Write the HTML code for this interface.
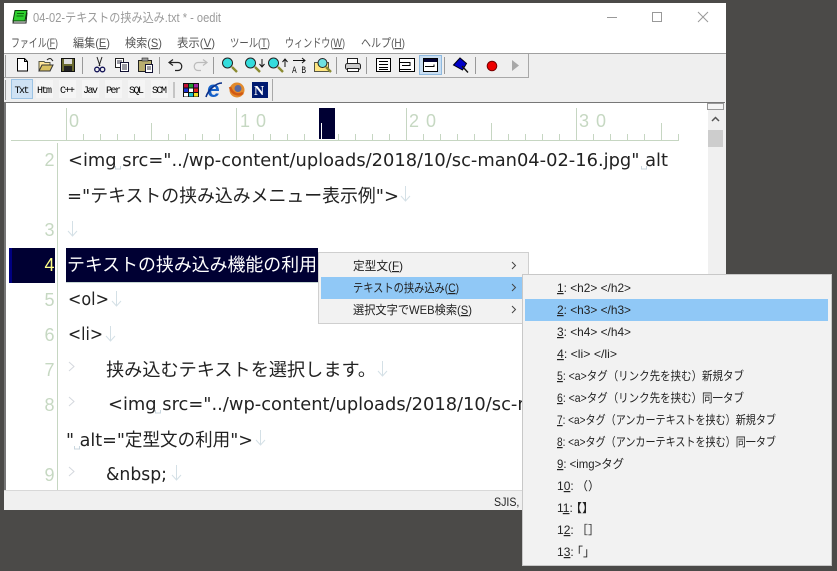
<!DOCTYPE html>
<html><head><meta charset="utf-8"><title>oedit</title>
<style>
html,body{margin:0;padding:0;background:#4b4a48;width:837px;height:571px;overflow:hidden}
svg{display:block}
.t{font-family:"DejaVu Sans","Noto Sans CJK JP",sans-serif;font-size:18px;fill:#222}
.j{font-family:"Liberation Sans","Noto Sans CJK JP",sans-serif;font-size:18px;fill:#222}
.n{font-family:"Liberation Sans",sans-serif;font-size:18px;fill:#c6d8c2}
.m{font-family:"Liberation Sans","Noto Sans CJK JP",sans-serif;font-size:12px;fill:#555}
.p{font-family:"Liberation Sans","Noto Sans CJK JP",sans-serif;font-size:12px;fill:#222}
.u{text-decoration:underline}
.b{font-family:"Liberation Mono",monospace;font-size:10px;fill:#000}
.ar{fill:none;stroke:#d4e0e6;stroke-width:1}
.tb{fill:none;stroke:#d4d8de;stroke-width:1}
.sp{fill:none;stroke:#c8d6de;stroke-width:1}
</style></head><body>
<svg width="837" height="571" viewBox="0 0 837 571" xmlns="http://www.w3.org/2000/svg">
<rect width="837" height="571" fill="#4b4a48"/>
<!-- window -->
<rect x="4" y="3" width="722" height="507" fill="#fff"/>
<!-- title -->
<g transform="translate(12,10)">
<path d="M3 3h12l-1 10H1z" fill="#fff" stroke="#222"/>
<path d="M3 0.500h12l-2 10.500H1z" fill="#2ecf2e" stroke="#0a3a0a"/>
<path d="M5 3.500h7M4.500 6h7" stroke="#0c6a0c"/>
</g>
<text class="m" x="33" y="22" style="font-size:12.500px;fill:#9a9a9a" textLength="188" lengthAdjust="spacingAndGlyphs">04-02-テキストの挟み込み.txt * - oedit</text>
<path d="M607 17.500h10" stroke="#999"/>
<rect x="652.500" y="12.500" width="9" height="9" fill="none" stroke="#999"/>
<path d="M698 12l10 10M708 12l-10 10" stroke="#999"/>
<!-- menu -->
<text class="m" x="11" y="47" textLength="47" lengthAdjust="spacingAndGlyphs"><tspan>ファイル(</tspan><tspan class="u">F</tspan><tspan>)</tspan></text>
<text class="m" x="73" y="47" textLength="37" lengthAdjust="spacingAndGlyphs"><tspan>編集(</tspan><tspan class="u">E</tspan><tspan>)</tspan></text>
<text class="m" x="125" y="47" textLength="37" lengthAdjust="spacingAndGlyphs"><tspan>検索(</tspan><tspan class="u">S</tspan><tspan>)</tspan></text>
<text class="m" x="177" y="47" textLength="38" lengthAdjust="spacingAndGlyphs"><tspan>表示(</tspan><tspan class="u">V</tspan><tspan>)</tspan></text>
<text class="m" x="230" y="47" textLength="40" lengthAdjust="spacingAndGlyphs"><tspan>ツール(</tspan><tspan class="u">T</tspan><tspan>)</tspan></text>
<text class="m" x="285" y="47" textLength="60" lengthAdjust="spacingAndGlyphs"><tspan>ウィンドウ(</tspan><tspan class="u">W</tspan><tspan>)</tspan></text>
<text class="m" x="361" y="47" textLength="44" lengthAdjust="spacingAndGlyphs"><tspan>ヘルプ(</tspan><tspan class="u">H</tspan><tspan>)</tspan></text>
<!-- toolbars -->
<rect x="4" y="53" width="722" height="49" fill="#efefef"/>
<rect x="4" y="53" width="722" height="1" fill="#a0a0a0"/>
<rect x="4" y="77" width="524" height="1" fill="#a8a8a8"/>
<rect x="528" y="54" width="1" height="24" fill="#a8a8a8"/>
<rect x="272" y="79" width="1" height="22" fill="#a8a8a8"/>
<rect x="5" y="55" width="1" height="22" fill="#999"/>
<rect x="5" y="80" width="1" height="20" fill="#999"/>
<!-- tb1 seps -->
<path d="M83 57v17M160 57v17M214 57v17M337 57v17M367 57v17M445 57v17M476 57v17M174.500 82v16" stroke="#999" fill="none" transform="translate(-.5,0)"/>
<!-- new -->
<path d="M17.500 58.500h7l3 3v9.500h-10z M24.500 58.500v3h3" fill="#fff" stroke="#000"/>
<!-- open -->
<path d="M39 61.500h5l1 1h5v8.500h-11z" fill="#ffe79a" stroke="#554"/>
<path d="M39 71l3-6h11l-3 6z" fill="#d8c060" stroke="#333"/>
<path d="M47 60c2-2 4-2 5 0l1 1" fill="none" stroke="#222"/>
<!-- save -->
<rect x="61.500" y="58.500" width="13" height="13" fill="#6b6b30" stroke="#111"/>
<rect x="64" y="59" width="8" height="5" fill="#ddd"/>
<rect x="64" y="66" width="8" height="5" fill="#222"/>
<!-- cut -->
<path d="M97 57l3 9M102 57l-3 9" stroke="#222" fill="none"/>
<circle cx="97" cy="69.500" r="2.300" fill="none" stroke="#115" stroke-width="1.300"/>
<circle cx="102.500" cy="69.500" r="2.300" fill="none" stroke="#115" stroke-width="1.300"/>
<!-- copy -->
<rect x="115.500" y="58.500" width="8" height="9" fill="#fff" stroke="#222"/>
<rect x="120.500" y="62.500" width="8" height="9" fill="#fff" stroke="#113"/>
<path d="M117 61h5M117 63h3M122 65h5M122 67h5M122 69h5" stroke="#334"/>
<!-- paste -->
<rect x="138.500" y="60.500" width="13" height="11" fill="#b8ad70" stroke="#222"/>
<rect x="142" y="58" width="6" height="3" fill="#999" stroke="#222" stroke-width=".6"/>
<rect x="145.500" y="64.500" width="7" height="8" fill="#fff" stroke="#113"/>
<path d="M147 67h4M147 69h4" stroke="#334"/>
<!-- undo / redo -->
<path d="M170 62.500h8c5 0 5 8 0 8h-3" fill="none" stroke="#222" stroke-width="1.200"/>
<path d="M173 59.500l-4 3 4 3" fill="none" stroke="#222" stroke-width="1.200"/>
<path d="M206 62.500h-8c-5 0-5 8 0 8h3" fill="none" stroke="#bbb" stroke-width="1.200"/>
<path d="M203 59.500l4 3-4 3" fill="none" stroke="#bbb" stroke-width="1.200"/>
<!-- find -->
<path d="M232 67l5 5" stroke="#8a8a30" stroke-width="2.400"/><circle cx="227.500" cy="63" r="5" fill="#34dcdc" stroke="#222"/>
<path d="M255 67l5 5" stroke="#8a8a30" stroke-width="2.400"/><circle cx="250.500" cy="63" r="5" fill="#34dcdc" stroke="#222"/>
<path d="M262 59v7M259.500 64l2.500 3 2.500-3" fill="none" stroke="#111"/>
<path d="M278 67l5 5" stroke="#8a8a30" stroke-width="2.400"/><circle cx="273.500" cy="63" r="5" fill="#34dcdc" stroke="#222"/>
<path d="M285 67v-7M282.500 62l2.500-3 2.500 3" fill="none" stroke="#111"/>
<!-- replace -->
<path d="M293 60.500h12M302 58l3 2.500-3 2.500" fill="none" stroke="#111"/>
<text x="292" y="73" style="font:10.500px 'Liberation Mono',monospace;fill:#111" textLength="14" lengthAdjust="spacingAndGlyphs">A B</text>
<!-- find file -->
<path d="M314.500 62.500h14v9h-14z" fill="#ffe680" stroke="#554"/>
<path d="M326 67l5 5" stroke="#8a8a30" stroke-width="2.400"/><circle cx="322.500" cy="63" r="4.500" fill="#6ee0e0" stroke="#222"/>
<!-- print -->
<rect x="347.500" y="58.500" width="10" height="5" fill="#fff" stroke="#222"/>
<rect x="345.500" y="63.500" width="15" height="6" rx="2" fill="#ccc" stroke="#222"/>
<rect x="347.500" y="68.500" width="11" height="3" fill="#fff" stroke="#222"/>
<!-- text format -->
<rect x="376.500" y="58.500" width="14" height="13" fill="#fff" stroke="#000"/>
<path d="M379 61.500h9M379 64.500h9M379 67.500h9M379 69.500h9" stroke="#000"/>
<rect x="399.500" y="58.500" width="15" height="13" fill="#fff" stroke="#000"/>
<path d="M400 62.500h10v3h-8M400 69.500h11" fill="none" stroke="#000"/>
<rect x="419.500" y="55.500" width="22" height="19" fill="#c9def2" stroke="#8fb9de"/>
<rect x="423.500" y="58.500" width="14" height="13" fill="#fff" stroke="#000"/>
<rect x="424" y="59" width="13" height="3" fill="#000033"/>
<path d="M425 66.500h9v-2" fill="none" stroke="#000"/>
<!-- pin -->
<path d="M453.500 65L460 58l6.500 5.500-4 6.500z" fill="#0000c8" stroke="#001"/>
<path d="M462 66l6 6.500" stroke="#111" stroke-width="1.400"/>
<!-- rec / play -->
<circle cx="492" cy="66" r="4.800" fill="#ee0000" stroke="#700"/>
<path d="M512 60l7 5.500-7 5.500z" fill="#a8a8a8"/>
<!-- tb2 -->
<rect x="11.500" y="79.500" width="21" height="19" fill="#cfe2f4" stroke="#9cc3e4"/>
<rect x="36" y="80" width="17" height="18" fill="#f5f5f5"/><rect x="59" y="80" width="17" height="18" fill="#f5f5f5"/><rect x="82" y="80" width="17" height="18" fill="#f5f5f5"/><rect x="105" y="80" width="17" height="18" fill="#f5f5f5"/><rect x="128" y="80" width="17" height="18" fill="#f5f5f5"/><rect x="151" y="80" width="17" height="18" fill="#f5f5f5"/>
<text class="b" x="14.500" y="93" textLength="15">Txt</text>
<text class="b" x="37" y="93" textLength="15">Htm</text>
<text class="b" x="60" y="93" textLength="15">C++</text>
<text class="b" x="83" y="93" textLength="15">Jav</text>
<text class="b" x="106" y="93" textLength="15">Per</text>
<text class="b" x="129" y="93" textLength="15">SQL</text>
<text class="b" x="152" y="93" textLength="15">SCM</text>
<!-- palette -->
<rect x="183" y="83" width="16" height="14" fill="#111"/>
<rect x="184" y="84" width="4" height="3.500" fill="#c01030"/><rect x="189" y="84" width="4" height="3.500" fill="#20a030"/><rect x="194" y="84" width="4" height="3.500" fill="#a020a0"/>
<rect x="184" y="88.500" width="4" height="3.500" fill="#2030d0"/><rect x="189" y="88.500" width="4" height="3.500" fill="#fff"/><rect x="194" y="88.500" width="4" height="3.500" fill="#e02020"/>
<rect x="184" y="93" width="4" height="3.500" fill="#fff"/><rect x="189" y="93" width="4" height="3.500" fill="#20c0d0"/><rect x="194" y="93" width="4" height="3.500" fill="#f0e020"/>
<!-- IE -->
<text x="207" y="97" style="font:bold 23px 'Liberation Sans',sans-serif;fill:#1560c8">e</text>
<path d="M206 97c2-7 10-14 16-14" fill="none" stroke="#0b2f88" stroke-width="1.600"/>
<!-- firefox -->
<circle cx="237" cy="90" r="7.500" fill="#e28a2c"/>
<circle cx="238" cy="88.500" r="3.500" fill="#5a6aa0"/>
<path d="M230 87c2 7 8 9 13 6" fill="none" stroke="#d25a14" stroke-width="2.500"/>
<!-- N -->
<rect x="252" y="82" width="16" height="16" fill="#001a70"/>
<text x="254" y="95" style="font:bold 14px 'Liberation Serif',serif;fill:#fff">N</text>
<!-- editor -->
<rect x="4" y="102" width="2" height="389" fill="#777"/>
<rect x="4" y="102" width="721" height="1" fill="#777"/>
<rect x="6" y="103" width="702" height="388" fill="#fff"/>
<!-- ruler -->
<path d="M11 140.500h668" stroke="#c6d6c2" fill="none"/>
<path stroke="#c6d6c2" fill="none" d="M66.500 108v32M236.500 108v32M406.500 108v32M576.500 108v32
M151.500 123v17M491.500 123v17M661.500 123v17
M83.500 134v6M100.500 134v6M117.500 134v6M134.500 134v6M168.500 134v6M185.500 134v6M202.500 134v6M219.500 134v6
M253.500 134v6M270.500 134v6M287.500 134v6M304.500 134v6M338.500 134v6M355.500 134v6M372.500 134v6M389.500 134v6
M423.500 134v6M440.500 134v6M457.500 134v6M474.500 134v6M508.500 134v6M525.500 134v6M542.500 134v6M559.500 134v6
M593.500 134v6M610.500 134v6M627.500 134v6M644.500 134v6M678.500 134v6"/>
<text class="n" x="69" y="127">0</text>
<text class="n" x="240 256" y="127">10</text>
<text class="n" x="409 426" y="127">20</text>
<text class="n" x="579 596" y="127">30</text>
<rect x="319" y="108" width="16" height="31" fill="#000033"/>
<rect x="321" y="123" width="1" height="16" fill="#fff"/>
<!-- gutter -->
<path d="M57.500 143v347" stroke="#c6d6c2" fill="none"/>
<text class="n" x="44.500" y="166">2</text>
<text class="n" x="44.500" y="236">3</text>
<rect x="9" y="248" width="46" height="35" fill="#000033"/>
<rect x="9" y="248" width="3" height="35" fill="#000080"/>
<text class="n" x="44.500" y="271" style="fill:#ffff88">4</text>
<text class="n" x="44.500" y="306">5</text>
<text class="n" x="44.500" y="341">6</text>
<text class="n" x="44.500" y="376">7</text>
<text class="n" x="44.500" y="411">8</text>
<text class="n" x="44.500" y="481">9</text>
<!-- text -->
<text class="t" x="68" y="166" textLength="600" lengthAdjust="spacingAndGlyphs">&lt;img src="../wp-content/uploads/2018/10/sc-man04-02-16.jpg" alt</text>
<path class="sp" d="M115.500 166v3h5v-3M641.500 166v3h5v-3"/>
<text class="t" x="67" y="202" textLength="332" lengthAdjust="spacingAndGlyphs">="テキストの挟み込みメニュー表示例"&gt;</text>
<path class="ar" d="M405.500 186v15M401 196l4.500 5 4.500-5"/>
<path class="ar" d="M72.500 221v15M68 231l4.500 5 4.500-5"/>
<rect x="66" y="248" width="252" height="34" fill="#000033"/>
<rect x="66" y="282" width="252" height="1" fill="#c6d6d2"/>
<text class="j" x="67" y="271" textLength="250" lengthAdjust="spacingAndGlyphs" style="fill:#fff">テキストの挟み込み機能の利用</text>
<text class="t" x="68" y="305" textLength="41" lengthAdjust="spacingAndGlyphs">&lt;ol&gt;</text>
<path class="ar" d="M116.500 291v15M112 301l4.500 5 4.500-5"/>
<text class="t" x="68" y="340" textLength="35" lengthAdjust="spacingAndGlyphs">&lt;li&gt;</text>
<path class="ar" d="M110.500 326v15M106 336l4.500 5 4.500-5"/>
<path class="tb" d="M69 362l5 4.500-5 4.500M69 397l5 4.500-5 4.500M69 467l5 4.500-5 4.500"/>
<text class="j" x="106" y="376" textLength="270" lengthAdjust="spacingAndGlyphs">挟み込むテキストを選択します。</text>
<path class="ar" d="M382.500 361v15M378 371l4.500 5 4.500-5"/>
<text class="t" x="108" y="410" textLength="600" lengthAdjust="spacingAndGlyphs">&lt;img src="../wp-content/uploads/2018/10/sc-man04-02-16.jpg" alt</text>
<path class="sp" d="M155.500 410v3h5v-3"/>
<text class="t" x="66" y="446" textLength="187" lengthAdjust="spacingAndGlyphs">" alt="定型文の利用"&gt;</text>
<path class="sp" d="M74.500 446v3h5v-3"/>
<path class="ar" d="M260.500 430v15M256 440l4.500 5 4.500-5"/>
<text class="t" x="106" y="480" textLength="61" lengthAdjust="spacingAndGlyphs">&amp;nbsp;</text>
<path class="ar" d="M176.500 465v15M172 475l4.500 5 4.500-5"/>
<!-- scrollbar -->
<rect x="708" y="103" width="16" height="388" fill="#f0f0f0"/>
<rect x="707.500" y="103.500" width="16" height="6" fill="#f4f4f4" stroke="#999"/>
<path d="M712 121l3.500-3.500 3.500 3.500" fill="none" stroke="#555" stroke-width="1.500"/>
<rect x="708" y="130" width="15" height="17" fill="#cdcdcd"/>
<rect x="724" y="103" width="2" height="407" fill="#efefef"/>
<!-- status -->
<rect x="4" y="490" width="722" height="20" fill="#f0f0f0"/>
<rect x="4" y="490" width="722" height="1" fill="#d8d8d8"/>
<text class="p" x="494" y="506" textLength="36" lengthAdjust="spacingAndGlyphs">SJIS, C</text>
<!-- context menu -->
<rect x="318.500" y="252.500" width="210" height="71" fill="#f2f2f2" stroke="#cfcfcf"/>
<rect x="321" y="277" width="201" height="22" fill="#90c8f6"/>
<text class="p" x="353" y="270" textLength="50" lengthAdjust="spacingAndGlyphs"><tspan>定型文(</tspan><tspan class="u">F</tspan><tspan>)</tspan></text>
<text class="p" x="353" y="292" textLength="106" lengthAdjust="spacingAndGlyphs"><tspan>テキストの挟み込み(</tspan><tspan class="u">C</tspan><tspan>)</tspan></text>
<text class="p" x="353" y="314" textLength="119" lengthAdjust="spacingAndGlyphs"><tspan>選択文字でWEB検索(</tspan><tspan class="u">S</tspan><tspan>)</tspan></text>
<path d="M512 262l3.500 3.500-3.500 3.500M512 284l3.500 3.500-3.500 3.500M512 306l3.500 3.500-3.500 3.500" fill="none" stroke="#444"/>
<!-- submenu -->
<rect x="522.500" y="274.500" width="309" height="291" fill="#f2f2f2" stroke="#c8c8c8"/>
<rect x="525" y="299" width="303" height="22" fill="#90c8f6"/>
<text class="p" x="557" y="292" textLength="74" lengthAdjust="spacingAndGlyphs"><tspan class="u">1</tspan><tspan>: &lt;h2&gt; &lt;/h2&gt;</tspan></text>
<text class="p" x="557" y="314" textLength="74" lengthAdjust="spacingAndGlyphs"><tspan class="u">2</tspan><tspan>: &lt;h3&gt; &lt;/h3&gt;</tspan></text>
<text class="p" x="557" y="336" textLength="74" lengthAdjust="spacingAndGlyphs"><tspan class="u">3</tspan><tspan>: &lt;h4&gt; &lt;/h4&gt;</tspan></text>
<text class="p" x="557" y="358" textLength="60" lengthAdjust="spacingAndGlyphs"><tspan class="u">4</tspan><tspan>: &lt;li&gt; &lt;/li&gt;</tspan></text>
<text class="p" x="557" y="380" textLength="187" lengthAdjust="spacingAndGlyphs"><tspan class="u">5</tspan><tspan>: &lt;a&gt;タグ（リンク先を挟む）新規タブ</tspan></text>
<text class="p" x="557" y="402" textLength="187" lengthAdjust="spacingAndGlyphs"><tspan class="u">6</tspan><tspan>: &lt;a&gt;タグ（リンク先を挟む）同一タブ</tspan></text>
<text class="p" x="557" y="424" textLength="219" lengthAdjust="spacingAndGlyphs"><tspan class="u">7</tspan><tspan>: &lt;a&gt;タグ（アンカーテキストを挟む）新規タブ</tspan></text>
<text class="p" x="557" y="446" textLength="219" lengthAdjust="spacingAndGlyphs"><tspan class="u">8</tspan><tspan>: &lt;a&gt;タグ（アンカーテキストを挟む）同一タブ</tspan></text>
<text class="p" x="557" y="468" textLength="67" lengthAdjust="spacingAndGlyphs"><tspan class="u">9</tspan><tspan>: &lt;img&gt;タグ</tspan></text>
<text class="p" x="557" y="490"><tspan>1</tspan><tspan class="u">0</tspan><tspan>:</tspan></text><text class="p" x="576" y="490">（）</text>
<text class="p" x="557" y="512"><tspan>1</tspan><tspan class="u">1</tspan><tspan>:</tspan></text><text class="p" x="570" y="512">【】</text>
<text class="p" x="557" y="534"><tspan>1</tspan><tspan class="u">2</tspan><tspan>:</tspan></text><text class="p" x="576" y="534">［］</text>
<text class="p" x="557" y="556"><tspan>1</tspan><tspan class="u">3</tspan><tspan>:</tspan></text><text class="p" x="571" y="556">「」</text>
</svg>
</body></html>
